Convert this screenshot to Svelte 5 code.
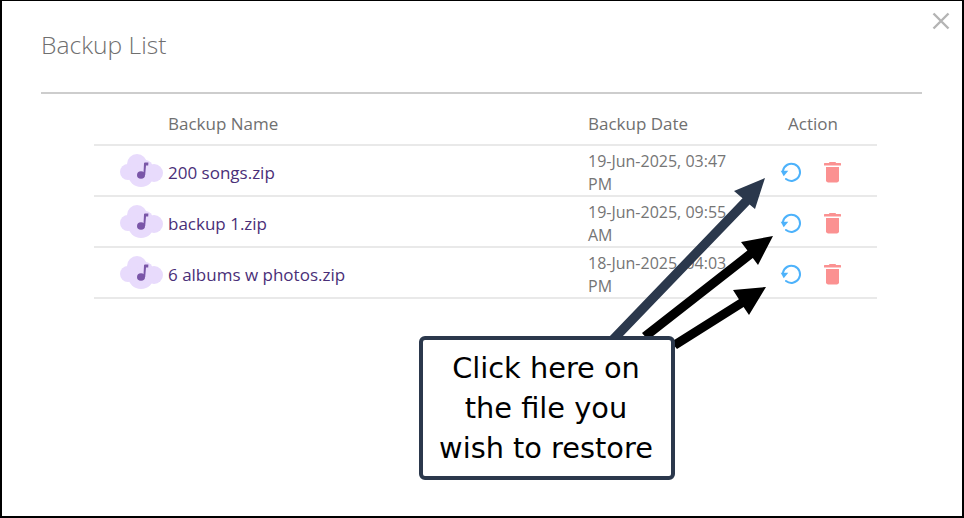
<script>
  const backups = [
    { name: "200 songs.zip", date: "19-Jun-2025, 03:47 PM" },
    { name: "backup 1.zip", date: "19-Jun-2025, 09:55 AM" },
    { name: "6 albums w photos.zip", date: "18-Jun-2025, 04:03 PM" },
  ];
</script>

<div class="frame">
  <button class="close" aria-label="Close">
    <svg width="18" height="18" viewBox="0 0 18 18">
      <path d="M1.5 1.5 L16.5 16.5 M16.5 1.5 L1.5 16.5" stroke="#b4b4b4" stroke-width="2.4" fill="none" />
    </svg>
  </button>

  <h1>Backup List</h1>

  <div class="table">
    <div class="row head">
      <div class="name">Backup Name</div>
      <div class="date">Backup Date</div>
      <div class="action">Action</div>
    </div>
    {#each backups as b}
      <div class="row">
        <div class="name">
          <svg class="cloud" width="44" height="34" viewBox="0 0 44 34">
            <g fill="#e8dbfc">
              <circle cx="17" cy="10" r="10" />
              <circle cx="8" cy="18" r="8" />
              <circle cx="34" cy="19" r="9" />
              <circle cx="21" cy="20" r="13" />
              <circle cx="25" cy="14" r="8" />
            </g>
            <ellipse cx="21" cy="21" rx="4" ry="3.8" fill="#7a56a8" />
            <path d="M23.4 21 L24 9.5 Q24 8.5 25 8.5 L28.4 8.5 L28.2 11.6 L26 11.6 L25.2 21 Z" fill="#7a56a8" />
          </svg>
          <span>{b.name}</span>
        </div>
        <div class="date"><span>{b.date}</span></div>
        <div class="action">
          <svg class="restore" width="22" height="22" viewBox="0 0 22 22" fill="none">
            <path d="M3 9.5 A8.6 8.6 0 1 1 6 18" stroke="#4db2fb" stroke-width="2" stroke-linecap="round" />
            <path d="M0.7 9.7 L8.3 9.7 L3.7 15.3 Z" fill="#4db2fb" />
          </svg>
          <svg class="trash" width="17" height="22" viewBox="0 0 17 22">
            <path d="M5 1.8 Q5 1 6 1 L11 1 Q12 1 12 1.8 L12 2 L16.4 2 Q17 2 17 2.6 L17 4.6 L0 4.6 L0 2.6 Q0 2 0.6 2 L5 2 Z" fill="#fb9191" />
            <path d="M2 6 L15 6 L15 19.6 Q15 21.4 13 21.4 L4 21.4 Q2 21.4 2 19.6 Z" fill="#fb9191" />
          </svg>
        </div>
      </div>
    {/each}
  </div>

  <!-- annotation arrows drawn over the dialog -->
  <svg class="arrows" width="964" height="518" viewBox="0 0 964 518">
    <path d="M609 337 L742.5 198.3 L734 191 L765 178 L755 209 L749.6 204.4 L622 337 Z" fill="#2b384c" />
    <path d="M642 333 L747.4 250.6 L741 242 L773 236 L758 265 L752.8 258 L648 340 Z" fill="#000" />
    <path d="M671 342 L738.9 299.2 L733 290 L766 287 L749 315 L743.6 306.9 L677 349 Z" fill="#000" />
  </svg>

  <div class="callout">Click here on<br />the file you<br />wish to restore</div>
</div>

<style>
  :global(body) {
    margin: 0;
  }

  .frame {
    position: relative;
    box-sizing: border-box;
    width: 964px;
    height: 518px;
    border: 2px solid #000;
    border-top-width: 1px;
    background: #fff;
    padding: 27px 40px 0 39px;
    font-family: "Open Sans", "Noto Sans", sans-serif;
    overflow: hidden;
  }

  .close {
    position: absolute;
    top: 11px;
    right: 12px;
    padding: 0;
    border: 0;
    background: none;
    line-height: 0;
  }

  h1 {
    margin: 0;
    height: 64px;
    border-bottom: 2px solid #cdcdcd;
    font-size: 24.6px;
    font-weight: 300;
    line-height: 33px;
    color: #6f6f6f;
  }

  .table {
    margin: 0 45px 0 53px;
  }

  .row {
    display: grid;
    grid-template-columns: 494px 200px 1fr;
    height: 49px;
    border-bottom: 2px solid #e9e9e9;
    align-items: center;
    font-size: 17px;
    color: #757575;
  }

  .row.head {
    box-sizing: border-box;
    height: 52px;
    padding-top: 8px;
    color: #707070;
  }

  .head .name {
    padding-left: 74px;
    color: #707070;
  }

  .name {
    display: flex;
    align-items: center;
    padding-left: 26px;
    color: #4a2f78;
  }

  .name span {
    padding-top: 3px;
  }

  .cloud {
    margin-right: 4px;
    flex: none;
  }

  .date {
    line-height: 23px;
  }

  .date span {
    display: block;
    width: 150px;
    padding-top: 4px;
    font-size: 16px;
  }

  .action {
    display: flex;
    align-items: center;
  }

  .restore {
    margin: 2px 0 0 -8px;
  }

  .trash {
    margin: 2px 0 0 22px;
  }

  .arrows {
    position: absolute;
    left: -2px;
    top: -1px;
  }

  .callout {
    position: absolute;
    left: 417px;
    top: 335px;
    box-sizing: border-box;
    width: 256px;
    height: 144px;
    border: 4px solid #2b384c;
    border-radius: 6px;
    padding-right: 2px;
    background: #fff;
    display: flex;
    align-items: center;
    justify-content: center;
    text-align: center;
    font-family: "DejaVu Sans", sans-serif;
    font-size: 28.8px;
    line-height: 40px;
    color: #000;
  }
</style>
